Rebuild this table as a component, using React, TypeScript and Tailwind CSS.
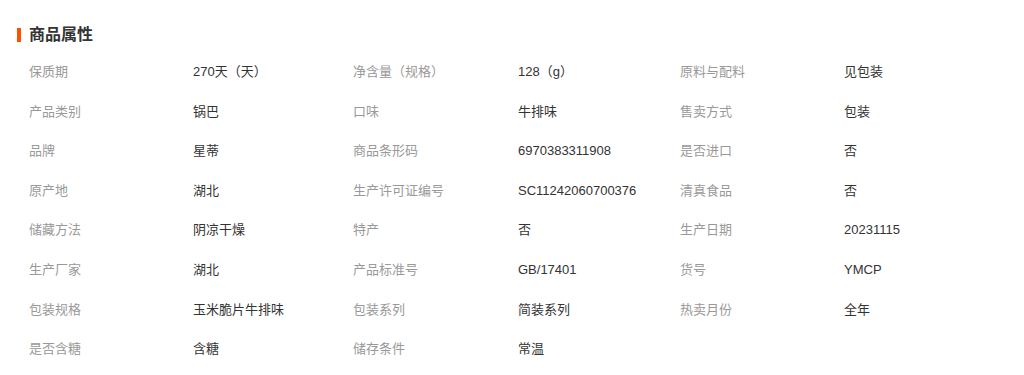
const rows: [string, string][][] = [
  [["保质期", "270天（天）"], ["净含量（规格）", "128（g）"], ["原料与配料", "见包装"]],
  [["产品类别", "锅巴"], ["口味", "牛排味"], ["售卖方式", "包装"]],
  [["品牌", "星蒂"], ["商品条形码", "6970383311908"], ["是否进口", "否"]],
  [["原产地", "湖北"], ["生产许可证编号", "SC11242060700376"], ["清真食品", "否"]],
  [["储藏方法", "阴凉干燥"], ["特产", "否"], ["生产日期", "20231115"]],
  [["生产厂家", "湖北"], ["产品标准号", "GB/17401"], ["货号", "YMCP"]],
  [["包装规格", "玉米脆片牛排味"], ["包装系列", "简装系列"], ["热卖月份", "全年"]],
  [["是否含糖", "含糖"], ["储存条件", "常温"]],
];

export default function App() {
  return (
    <div
      className="w-[1024px] h-[375px] bg-white overflow-hidden"
      style={{ fontFamily: '"Liberation Sans", "Noto Sans CJK SC", sans-serif' }}
    >
      <div className="flex items-center pl-[17px] pt-[27px] h-[16px] box-content">
        <span className="w-[4px] h-[14px] bg-[#ff5000]" />
        <h2 className="ml-[8px] text-[16px] font-bold text-[#333] leading-[16px]">商品属性</h2>
      </div>
      <div className="mt-[9px] pl-[29px]">
        {rows.map((row, i) => (
          <div
            key={i}
            className="grid grid-cols-[164px_160px_165px_162px_164px_1fr] h-[39.6px] items-center text-[13px]"
          >
            {row.map(([k, v]) => [
              <span key={k} className="text-[#999]">{k}</span>,
              <span key={k + "v"} className="text-[#333]">{v}</span>,
            ])}
          </div>
        ))}
      </div>
    </div>
  );
}
